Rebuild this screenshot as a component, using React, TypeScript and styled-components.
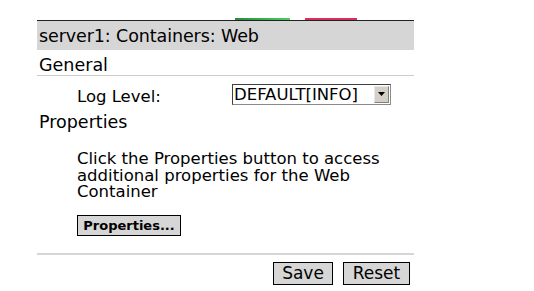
import React from "react";
import styled, { createGlobalStyle } from "styled-components";

const GlobalStyle = createGlobalStyle`
    body {
        margin: 0;
        background: #ffffff;
        font-family: "DejaVu Sans", Verdana, sans-serif;
        color: #000000;
    }
`;

const Page = styled.div`
    width: 377px;
    margin-left: 37px;
    padding-top: 18px;
`;

const TopRule = styled.div`
    display: flex;
    align-items: flex-end;
    height: 2px;
    border-bottom: 1px solid #222222;
`;

const RuleSegment = styled.div<{ $from: number; $width: number; $color: string }>`
    margin-left: ${(p) => p.$from}px;
    width: ${(p) => p.$width}px;
    height: 2px;
    background: ${(p) => p.$color};
`;

const TitleBar = styled.div`
    height: 29px;
    background: #d6d6d6;
    display: flex;
    align-items: center;
    padding-left: 2px;
    font-size: 17.5px;
    letter-spacing: -0.1px;
`;

const SectionTitle = styled.div<{ $underline?: boolean }>`
    font-size: 17.5px;
    line-height: 20px;
    padding-left: 2px;
    height: ${(p) => (p.$underline ? "20px" : "auto")};
    margin-top: ${(p) => (p.$underline ? "5px" : "0")};
    border-bottom: ${(p) => (p.$underline ? "1px solid #cccccc" : "none")};
`;

const FieldRow = styled.div`
    display: flex;
    align-items: center;
    height: 36px;
    padding-left: 40px;
`;

const FieldLabel = styled.div`
    width: 155px;
    font-size: 16.5px;
    padding-top: 5px;
`;

const Select = styled.div`
    width: 156px;
    height: 19px;
    display: flex;
    align-items: center;
    justify-content: space-between;
    border: 1px solid #8a8a8a;
    border-left-color: #404040;
    border-top-color: #404040;
    background: #ffffff;
    font-size: 16.5px;
    padding-left: 1px;
    overflow: hidden;
    white-space: nowrap;
`;

const SelectArrow = styled.div`
    flex: none;
    width: 13px;
    height: 15px;
    margin-right: 1px;
    background: #d4d0c8;
    border: 1px solid #e8e8e8;
    border-right-color: #808080;
    border-bottom-color: #808080;
    display: flex;
    align-items: center;
    justify-content: center;
`;

const Description = styled.p`
    margin: 19px 0 0 40px;
    font-size: 16.5px;
    line-height: 16.5px;
    width: 325px;
`;

const SmallButton = styled.button`
    display: block;
    margin: 14px 0 0 40px;
    width: 104px;
    height: 21px;
    padding: 0;
    background: #d6d6d6;
    border: 1px solid #000000;
    font-family: "DejaVu Sans", Verdana, sans-serif;
    font-weight: bold;
    font-size: 13px;
    color: #000000;
`;

const Divider = styled.div`
    margin-top: 17px;
    height: 2px;
    background: #d6d6d6;
`;

const Actions = styled.div`
    display: flex;
    justify-content: flex-end;
    gap: 10px;
    margin-top: 7px;
    padding-right: 4px;
`;

const ActionButton = styled.button<{ $width: number }>`
    width: ${(p) => p.$width}px;
    height: 23px;
    padding: 0;
    background: #d6d6d6;
    border: 1px solid #000000;
    font-family: "DejaVu Sans", Verdana, sans-serif;
    font-size: 17px;
    color: #000000;
`;

function App() {
    return (
        <>
            <GlobalStyle />
            <Page>
                <TopRule>
                    <RuleSegment $from={198} $width={55} $color="linear-gradient(90deg, #2a8a3a, #46d060)" />
                    <RuleSegment $from={15} $width={52} $color="#d8305a" />
                </TopRule>
                <TitleBar>server1: Containers: Web</TitleBar>
                <SectionTitle $underline>General</SectionTitle>
                <FieldRow>
                    <FieldLabel>Log Level:</FieldLabel>
                    <Select>
                        DEFAULT[INFO]
                        <SelectArrow>
                            <svg width="7" height="4" viewBox="0 0 7 4">
                                <path d="M0 0 H7 L3.5 4 Z" fill="#000000" />
                            </svg>
                        </SelectArrow>
                    </Select>
                </FieldRow>
                <SectionTitle>Properties</SectionTitle>
                <Description>
                    Click the Properties button to access additional properties for the Web Container
                </Description>
                <SmallButton>Properties...</SmallButton>
                <Divider />
                <Actions>
                    <ActionButton $width={60}>Save</ActionButton>
                    <ActionButton $width={67}>Reset</ActionButton>
                </Actions>
            </Page>
        </>
    );
}

export default App;
